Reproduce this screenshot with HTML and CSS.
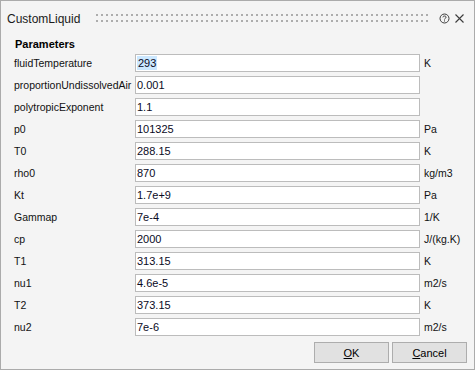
FILE: index.html
```html
<!DOCTYPE html>
<html>
<head>
<meta charset="utf-8">
<link rel="stylesheet" href="styles.css">
</head>
<body>
<div class="window">
  <div class="titlebar">
    <span class="title">CustomLiquid</span>
    <span class="grip"></span>
    <svg class="help" width="11" height="11" viewBox="0 0 11 11">
      <circle cx="5.5" cy="5.5" r="4.5" fill="none" stroke="#3c3c3c" stroke-width="1"/>
      <path d="M3.9 4.3 C3.9 2.6 7.1 2.6 7.1 4.2 C7.1 5.3 5.5 5.3 5.5 6.5" fill="none" stroke="#3c3c3c" stroke-width="1"/>
      <rect x="5" y="7.4" width="1" height="1.1" fill="#3c3c3c"/>
    </svg>
    <svg class="close" width="9" height="9" viewBox="0 0 9 9">
      <path d="M0.5 0.5 L8.5 8.5 M8.5 0.5 L0.5 8.5" stroke="#3c3c3c" stroke-width="1.1"/>
    </svg>
  </div>
  <div class="content">
    <div class="section">Parameters</div>
    <div class="grid">
      <div class="label">fluidTemperature</div><div class="field"><span class="sel">293</span></div><div class="unit">K</div>
      <div class="label">proportionUndissolvedAir</div><div class="field">0.001</div><div class="unit"></div>
      <div class="label">polytropicExponent</div><div class="field">1.1</div><div class="unit"></div>
      <div class="label">p0</div><div class="field">101325</div><div class="unit">Pa</div>
      <div class="label">T0</div><div class="field">288.15</div><div class="unit">K</div>
      <div class="label">rho0</div><div class="field">870</div><div class="unit">kg/m3</div>
      <div class="label">Kt</div><div class="field">1.7e+9</div><div class="unit">Pa</div>
      <div class="label">Gammap</div><div class="field">7e-4</div><div class="unit">1/K</div>
      <div class="label">cp</div><div class="field">2000</div><div class="unit">J/(kg.K)</div>
      <div class="label">T1</div><div class="field">313.15</div><div class="unit">K</div>
      <div class="label">nu1</div><div class="field">4.6e-5</div><div class="unit">m2/s</div>
      <div class="label">T2</div><div class="field">373.15</div><div class="unit">K</div>
      <div class="label">nu2</div><div class="field">7e-6</div><div class="unit">m2/s</div>
    </div>
    <div class="buttons">
      <div class="btn"><u>O</u>K</div>
      <div class="btn"><u>C</u>ancel</div>
    </div>
  </div>
</div>
</body>
</html>
```

FILE: styles.css
```css
html, body {
  margin: 0;
  padding: 0;
  background: #ffffff;
}
body {
  font-family: "Liberation Sans", Arial, sans-serif;
  color: #000;
}
.window {
  width: 475px;
  height: 370px;
  box-sizing: border-box;
  border: 1px solid #ababab;
  background: #f4f4f4;
  display: flex;
  flex-direction: column;
}
.titlebar {
  height: 36px;
  display: flex;
  align-items: center;
  padding-left: 6px;
  padding-right: 10px;
}
.title {
  font-size: 12px;
  color: #1a1a1a;
}
.grip {
  flex: 1;
  height: 8px;
  margin-left: 16px;
  margin-right: 10px;
  margin-top: -2px;
  background-image:
    linear-gradient(to bottom, transparent 0 2px, #f4f4f4 2px 6px, transparent 6px 8px),
    linear-gradient(to right, #adadad 0 2px, transparent 2px 5px);
  background-size: 100% 8px, 5px 8px;
  background-repeat: no-repeat, repeat-x;
}
.help {
  margin-right: 5px;
  margin-top: -2px;
}
.close {
  margin-top: -2px;
}
.content {
  padding-left: 13px;
  padding-right: 7px;
  display: flex;
  flex-direction: column;
}
.section {
  font-weight: bold;
  font-size: 11px;
  line-height: 14px;
  margin-left: 1px;
}
.grid {
  margin-top: 3px;
  display: grid;
  grid-template-columns: 121px 285px auto;
  grid-auto-rows: 18px;
  row-gap: 4px;
  font-size: 10.5px;
}
.label {
  display: flex;
  align-items: center;
  white-space: nowrap;
  color: #111;
}
.field {
  box-sizing: border-box;
  background: #ffffff;
  border: 1px solid #bcbcbc;
  padding-left: 1px;
  display: flex;
  align-items: center;
  color: #0a0a1e;
  font-size: 11px;
}
.sel {
  background: #cce8ff;
  padding: 1px 1px;
}
.unit {
  display: flex;
  align-items: center;
  padding-left: 4px;
  color: #111;
}
.buttons {
  margin-top: 6px;
  display: flex;
  justify-content: flex-end;
  gap: 3px;
}
.btn {
  width: 75px;
  height: 21px;
  box-sizing: border-box;
  border: 1px solid #adadad;
  background: #e1e1e1;
  font-size: 11px;
  display: flex;
  align-items: center;
  justify-content: center;
  color: #000;
}
```
